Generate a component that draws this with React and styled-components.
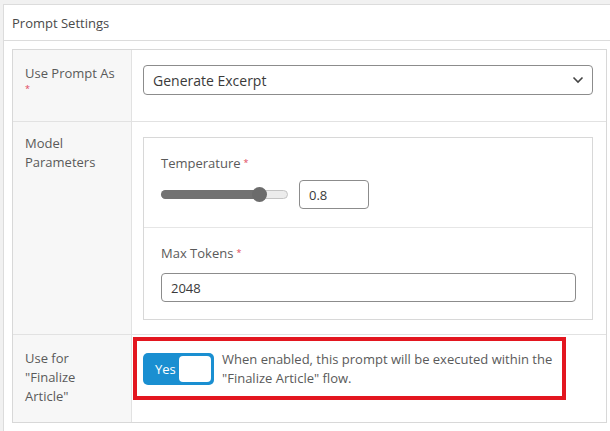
import React from "react";
import styled, { createGlobalStyle } from "styled-components";

const GlobalStyle = createGlobalStyle`
  html, body {
    margin: 0;
    padding: 0;
    background: #f1f1f1;
  }
  body {
    font-family: "Open Sans", "Liberation Sans", sans-serif;
    color: #5a5a5a;
  }
  * { box-sizing: border-box; }
`;

const Page = styled.div`
  padding: 4px 0 0 3px;
  width: 610px;
  height: 431px;
  overflow: hidden;
`;

const Panel = styled.div`
  background: #fff;
  border-top: 1px solid #dcdcdc;
  border-left: 1px solid #dcdcdc;
  height: 100%;
`;

const PanelHeader = styled.div`
  height: 36px;
  display: flex;
  align-items: center;
  padding: 0 8px;
  font-size: 13px;
  color: #4a4a4a;
  border-bottom: 1px solid #dcdcdc;
`;

const PanelBody = styled.div`
  padding: 8px 3px 8px 8px;
`;

const Table = styled.div`
  border: 1px solid #d8d8d8;
`;

const Row = styled.div`
  display: grid;
  grid-template-columns: 119px 1fr;
  min-height: ${(p) => p.height}px;
  border-top: ${(p) => (p.first ? "none" : "1px solid #e2e2e2")};
`;

const Label = styled.div`
  background: #f7f7f7;
  border-right: 1px solid #e2e2e2;
  padding: ${(p) => p.pad || "14px 12px"};
  font-size: 13px;
  line-height: 19px;
  color: #5a5a5a;
`;

const Req = styled.span`
  color: #e0455a;
  font-size: 9px;
  vertical-align: top;
  margin-left: 3px;
`;

const ReqBlock = styled.div`
  color: #e0455a;
  font-size: 9px;
  line-height: 12px;
`;

const Cell = styled.div`
  padding: ${(p) => p.pad};
`;

const SelectBox = styled.div`
  height: 30px;
  border: 1px solid #8c8c8c;
  border-radius: 4px;
  display: flex;
  align-items: center;
  justify-content: space-between;
  padding: 0 8px 0 9px;
  font-size: 14px;
  color: #3a3a3a;
`;

const Inner = styled.div`
  border: 1px solid #d8d8d8;
`;

const Section = styled.div`
  padding: ${(p) => p.pad};
  border-top: ${(p) => (p.divided ? "1px solid #e6e6e6" : "none")};
`;

const FieldLabel = styled.div`
  font-size: 13px;
  line-height: 18px;
  color: #5a5a5a;
  margin-bottom: ${(p) => p.gap}px;
`;

const SliderRow = styled.div`
  display: flex;
  align-items: center;
  gap: 11px;
`;

const Track = styled.div`
  position: relative;
  width: 127px;
  height: 9px;
  border-radius: 5px;
  background: #ececec;
  border: 1px solid #c4c4c4;
`;

const Fill = styled.div`
  position: absolute;
  left: -1px;
  top: -1px;
  bottom: -1px;
  border-radius: 5px;
  background: #727272;
`;

const Thumb = styled.div`
  position: absolute;
  top: 50%;
  width: 15px;
  height: 15px;
  margin: -7.5px 0 0 -7.5px;
  border-radius: 50%;
  background: #6c6c6c;
`;

const TextInput = styled.div`
  width: ${(p) => p.width};
  height: 29px;
  border: 1px solid #8c8c8c;
  border-radius: 4px;
  display: flex;
  align-items: center;
  padding: 0 9px;
  font-size: 13px;
  color: #3a3a3a;
`;

const Highlight = styled.div`
  width: 433px;
  height: 63px;
  border: 4px solid #e3161f;
  padding: 12px 4px 0 6px;
  display: flex;
  align-items: flex-start;
  gap: 8px;
`;

const Toggle = styled.div`
  width: 71px;
  height: 32px;
  flex: none;
  border-radius: 5px;
  background: #1a8fd1;
  display: flex;
  align-items: center;
  justify-content: space-between;
  padding: 0 3px 0 12px;
  color: #fff;
  font-size: 13px;
`;

const Knob = styled.div`
  width: 32px;
  height: 26px;
  border-radius: 4px;
  background: #fff;
`;

const Help = styled.div`
  font-size: 13px;
  line-height: 19px;
  color: #5a5a5a;
  margin-top: -3px;
  white-space: nowrap;
`;

const Chevron = () => (
  <svg width="12" height="8" viewBox="0 0 12 8">
    <path d="M1.5 1.5 6 6l4.5-4.5" fill="none" stroke="#444" strokeWidth="1.6" />
  </svg>
);

const Slider = ({ value }) => {
  const pos = 7.5 + value * (127 - 15);
  return (
    <Track>
      <Fill style={{ width: pos }} />
      <Thumb style={{ left: pos }} />
    </Track>
  );
};

export default function App() {
  return (
    <>
      <GlobalStyle />
      <Page>
        <Panel>
          <PanelHeader>Prompt Settings</PanelHeader>
          <PanelBody>
            <Table>
              <Row first height={71}>
                <Label pad="14px 12px 0">
                  Use Prompt As
                  <ReqBlock>*</ReqBlock>
                </Label>
                <Cell pad="15px 13px 0 11px">
                  <SelectBox>
                    Generate Excerpt
                    <Chevron />
                  </SelectBox>
                </Cell>
              </Row>
              <Row height={213}>
                <Label pad="12px 12px">
                  Model
                  <br />
                  Parameters
                </Label>
                <Cell pad="15px 13px 14px 11px">
                  <Inner>
                    <Section pad="16px 17px 18px">
                      <FieldLabel gap={8}>
                        Temperature<Req>*</Req>
                      </FieldLabel>
                      <SliderRow>
                        <Slider value={0.8} />
                        <TextInput width="70px">0.8</TextInput>
                      </SliderRow>
                    </Section>
                    <Section divided pad="16px 16px 17px 17px">
                      <FieldLabel gap={11}>
                        Max Tokens<Req>*</Req>
                      </FieldLabel>
                      <TextInput width="100%">2048</TextInput>
                    </Section>
                  </Inner>
                </Cell>
              </Row>
              <Row height={88}>
                <Label pad="14px 12px">
                  Use for
                  <br />
                  "Finalize
                  <br />
                  Article"
                </Label>
                <Cell pad="2px 0 0 1px">
                  <Highlight>
                    <Toggle>
                      Yes
                      <Knob />
                    </Toggle>
                    <Help>
                      When enabled, this prompt will be executed within the
                      <br />
                      "Finalize Article" flow.
                    </Help>
                  </Highlight>
                </Cell>
              </Row>
            </Table>
          </PanelBody>
        </Panel>
      </Page>
    </>
  );
}
